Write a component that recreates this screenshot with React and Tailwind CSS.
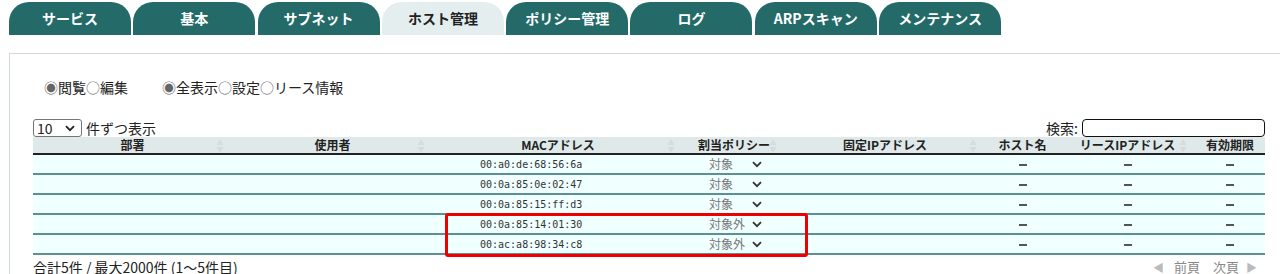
import { useState } from 'react';

const tabs = ['サービス', '基本', 'サブネット', 'ホスト管理', 'ポリシー管理', 'ログ', 'ARPスキャン', 'メンテナンス'];

const columns = [
  { label: '部署', w: 'w-[199px]', sort: true },
  { label: '使用者', w: 'w-[201px]', sort: true },
  { label: 'MACアドレス', w: 'w-[250px]', sort: true },
  { label: '割当ポリシー', w: 'w-[102px]', sort: true },
  { label: '固定IPアドレス', w: 'w-[200px]', sort: true },
  { label: 'ホスト名', w: 'w-[75px]', sort: false },
  { label: 'リースIPアドレス', w: 'w-[135px]', sort: true },
  { label: '有効期限', w: 'w-[70px]', sort: false },
];

const hosts = [
  { mac: '00:a0:de:68:56:6a', policy: '対象' },
  { mac: '00:0a:85:0e:02:47', policy: '対象' },
  { mac: '00:0a:85:15:ff:d3', policy: '対象' },
  { mac: '00:0a:85:14:01:30', policy: '対象外' },
  { mac: '00:ac:a8:98:34:c8', policy: '対象外' },
];

const jp = { fontFamily: '"Noto Sans CJK JP", "Noto Sans", sans-serif' };

function SortIcon() {
  return (
    <svg width="8" height="16" viewBox="0 0 8 16" className="absolute right-[8px] top-[1px]">
      <path d="M4 1 L7.5 7 H0.5 Z" fill="#d6dcdc" />
      <path d="M4 15 L7.5 9 H0.5 Z" fill="#d6dcdc" />
    </svg>
  );
}

function Chevron() {
  return (
    <svg width="10" height="7" viewBox="0 0 10 7" className="ml-auto mr-[3px]">
      <path d="M1 1.2 L5 5.2 L9 1.2" fill="none" stroke="#333" strokeWidth="1.8" />
    </svg>
  );
}

function HostRow({ host }) {
  return (
    <div className="flex h-[20px] items-center border-b-2 border-[#5d9090] bg-[#f0ffff]">
      <div className="w-[199px]" />
      <div className="w-[201px]" />
      <div
        className="w-[250px] pl-[47px] text-[10px] text-[#333]"
        style={{ fontFamily: '"DejaVu Sans Mono", monospace' }}
      >
        {host.mac}
      </div>
      <div className="flex w-[102px] items-center pl-[26px] pr-[20px] text-[12px] text-[#777]">
        <span>{host.policy}</span>
        <Chevron />
      </div>
      <div className="w-[200px]" />
      {[0, 1, 2].map((i) => (
        <div
          key={i}
          className={`flex justify-center ${i === 0 ? 'w-[75px]' : i === 1 ? 'w-[135px]' : 'w-[70px]'}`}
        >
          <span className="mt-[1px] block h-[2px] w-[8px] bg-[#555]" />
        </div>
      ))}
    </div>
  );
}

export default function App() {
  const [active] = useState(3);

  return (
    <div className="relative h-[274px] w-[1280px] overflow-hidden bg-white text-[#222]" style={jp}>
      <div className="flex gap-[2.3px] pl-[9px] pt-[2px]">
        {tabs.map((t, i) => (
          <div
            key={t}
            className={`flex h-[33px] w-[122px] items-center justify-center rounded-t-[20px] text-[14px] font-bold ${
              i === active ? 'bg-[#e4eeee] text-[#222]' : 'bg-[#246a69] text-white'
            }`}
          >
            {t}
          </div>
        ))}
      </div>

      <div className="ml-[9px] mt-[18px] h-[300px] border-l border-t border-[#cfd9d9] pl-[23px] pr-[15px]">
        <div className="flex pl-[11px] pt-[23px] text-[14px] leading-[20px]">
          <span className="w-[118px]">
            <span className="text-[#666]">◉</span>閲覧<span className="text-[#666]">○</span>編集
          </span>
          <span>
            <span className="text-[#666]">◉</span>全表示<span className="text-[#666]">○</span>設定
            <span className="text-[#666]">○</span>リース情報
          </span>
        </div>

        <div className="mt-[22px] flex h-[18px] items-center justify-between text-[14px]">
          <div className="flex items-center">
            <div className="flex h-[18px] w-[49px] items-center rounded-[3px] border border-[#767676] pl-[3px] text-[14px]">
              <span>10</span>
              <svg width="10" height="7" viewBox="0 0 10 7" className="ml-auto mr-[6px]">
                <path d="M1 1.2 L5 5.2 L9 1.2" fill="none" stroke="#222" strokeWidth="1.8" />
              </svg>
            </div>
            <span className="ml-[4px]">件ずつ表示</span>
          </div>
          <div className="flex items-center">
            <span>検索:</span>
            <div className="ml-[4px] h-[18px] w-[183px] rounded-[4px] border-[1.5px] border-[#111]" />
          </div>
        </div>

        <div className="relative w-[1232px]">
          <div className="flex h-[18px] items-center border-b-2 border-[#222] bg-[#dfe9e9] text-[12px] font-bold">
            {columns.map((c) => (
              <div key={c.label} className={`relative h-full text-center leading-[16px] ${c.w}`}>
                {c.label}
                {c.sort && <SortIcon />}
              </div>
            ))}
          </div>
          {hosts.map((h) => (
            <HostRow key={h.mac} host={h} />
          ))}
          <div className="absolute left-[412px] top-[76px] h-[44px] w-[363px] rounded-[3px] border-[3px] border-[#ee0000]" />
        </div>

        <div className="mt-[3px] flex w-[1232px] items-center justify-between text-[14px] leading-[18px]">
          <span>合計5件 / 最大2000件 (1〜5件目)</span>
          <div className="mr-[8px] flex items-center text-[13px] text-[#888]">
            <span className="text-[11px] text-[#bbb]">◀</span>
            <span className="ml-[10px]">前頁</span>
            <span className="ml-[13px]">次頁</span>
            <span className="ml-[7px] text-[11px] text-[#bbb]">▶</span>
          </div>
        </div>
      </div>
    </div>
  );
}
